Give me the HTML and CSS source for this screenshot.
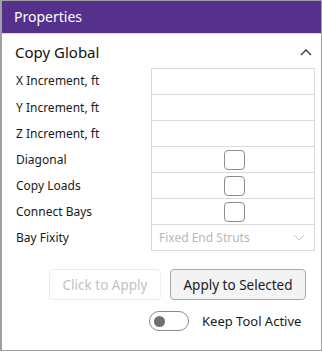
FILE: index.html
```html
<!DOCTYPE html>
<html>
<head>
<meta charset="utf-8">
<link rel="stylesheet" href="styles.css">
</head>
<body>
<div class="panel">
  <div class="header">Properties</div>
  <div class="section-head">
    <span class="section-title">Copy Global</span>
    <svg class="chev-up" width="12" height="8" viewBox="0 0 12 8"><path d="M1 7 L6 2 L11 7" fill="none" stroke="#3a3a3a" stroke-width="1.4"/></svg>
  </div>
  <div class="props">
    <div class="row first"><div class="label">X Increment, ft</div><div class="value"></div></div>
    <div class="row"><div class="label">Y Increment, ft</div><div class="value"></div></div>
    <div class="row"><div class="label">Z Increment, ft</div><div class="value"></div></div>
    <div class="row"><div class="label">Diagonal</div><div class="value center"><span class="check"></span></div></div>
    <div class="row"><div class="label">Copy Loads</div><div class="value center"><span class="check"></span></div></div>
    <div class="row"><div class="label">Connect Bays</div><div class="value center"><span class="check"></span></div></div>
    <div class="row"><div class="label">Bay Fixity</div><div class="value select"><span>Fixed End Struts</span><svg width="12" height="7" viewBox="0 0 12 7"><path d="M1 1 L6 6 L11 1" fill="none" stroke="#c4c4c4" stroke-width="1"/></svg></div></div>
  </div>
  <div class="buttons">
    <button class="btn disabled">Click to Apply</button>
    <button class="btn primary">Apply to Selected</button>
  </div>
  <div class="toggle-row">
    <span class="toggle"><span class="knob"></span></span>
    <span class="toggle-label">Keep Tool Active</span>
  </div>
</div>
</body>
</html>
```
FILE: styles.css
```css
html, body {
  margin: 0;
  padding: 0;
  background: #ffffff;
}
body {
  font-family: "Noto Sans", "Open Sans", sans-serif;
  color: #1a1a1a;
}
.panel {
  width: 322px;
  height: 351px;
  box-sizing: border-box;
  border: 1px solid #a0a0a0;
  border-left-width: 2px;
  background: #fff;
  display: flex;
  flex-direction: column;
}
.header {
  box-sizing: border-box;
  background: #55308c;
  color: #ffffff;
  font-size: 14px;
  line-height: 32px;
  padding-left: 12px;
  border-bottom: 1px solid #d8d8d8;
  height: 33px;
}
.section-head {
  height: 35px;
  display: flex;
  align-items: center;
  justify-content: space-between;
  padding: 1px 9px 0 13px;
  box-sizing: border-box;
}
.section-title {
  font-size: 15px;
  color: #111;
}
.props {
  display: flex;
  flex-direction: column;
  padding-left: 14px;
}
.row {
  display: flex;
  height: 26px;
}
.label {
  width: 135px;
  font-size: 12px;
  line-height: 26px;
  color: #1a1a1a;
}
.value {
  width: 164px;
  box-sizing: border-box;
  border: 1px solid #dadada;
  border-top: none;
  height: 26px;
}
.row.first .value {
  border-top: 1px solid #dadada;
  height: 27px;
  margin-top: -1px;
}
.row.first .label {
  margin-top: -1px;
}
.center {
  display: flex;
  align-items: center;
  justify-content: center;
  padding-left: 3px;
}
.check {
  width: 19px;
  height: 18px;
  border: 1px solid #8c8c8c;
  border-radius: 4px;
}
.select {
  display: flex;
  align-items: center;
  justify-content: space-between;
  padding: 0 9px 0 7px;
  font-size: 12px;
  color: #b8b8b8;
}
.buttons {
  display: flex;
  justify-content: flex-end;
  gap: 9px;
  padding-right: 15px;
  margin-top: 18px;
}
.btn {
  font-family: "Noto Sans", "Open Sans", sans-serif;
  font-size: 13.5px;
  height: 31px;
  border-radius: 4px;
  padding: 0;
  margin: 0;
}
.btn.disabled {
  width: 112px;
  background: #ffffff;
  border: 1px solid #ececec;
  color: #c2c2c2;
}
.btn.primary {
  width: 136px;
  background: #f3f3f3;
  border: 1px solid #a8a8a8;
  color: #1a1a1a;
}
.toggle-row {
  display: flex;
  align-items: center;
  margin-top: 11px;
  padding-left: 147px;
  gap: 13px;
}
.toggle {
  width: 40px;
  height: 20px;
  box-sizing: border-box;
  border: 1px solid #8a8a8a;
  border-radius: 10px;
  display: flex;
  align-items: center;
  padding-left: 4px;
}
.knob {
  width: 11px;
  height: 11px;
  border-radius: 50%;
  background: #6e6e78;
}
.toggle-label {
  font-size: 13px;
  color: #1a1a1a;
}
```
